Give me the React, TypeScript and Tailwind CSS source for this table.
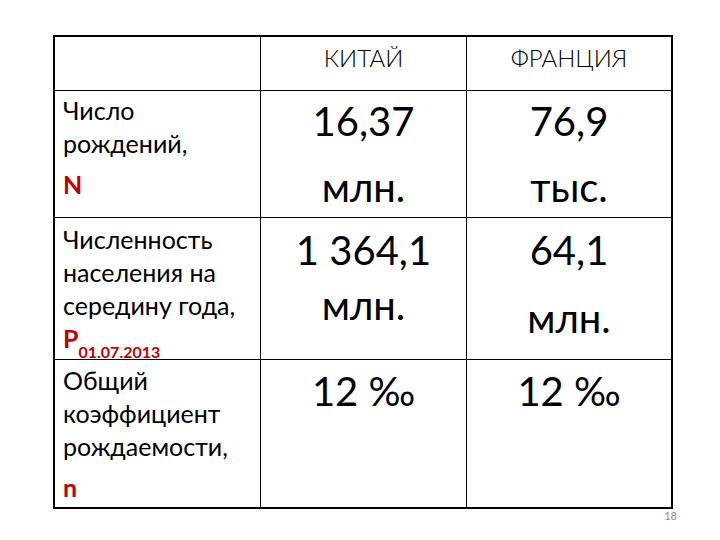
import React from "react";

const RED = "text-[#c00000]";

export default function App() {
  return (
    <div
      className="w-[720px] h-[540px] bg-white text-black overflow-hidden"
      style={{ fontFamily: "Lato, 'Open Sans', 'Noto Sans', sans-serif" }}
    >
      <div className="pt-[35px] pl-[53px]">
        <div className="w-[620px] h-[474px] border-2 border-black grid grid-cols-[206px_206px_1fr] grid-rows-[54px_127px_142px_1fr]">
          {/* header */}
          <div className="border-r border-b border-black" />
          <div className="border-r border-b border-black pt-[9px] text-center text-[24px] leading-[24px] font-light">
            КИТАЙ
          </div>
          <div className="border-b border-black pt-[9px] text-center text-[24px] leading-[24px] font-light">
            ФРАНЦИЯ
          </div>

          {/* row 1 */}
          <div className="border-r border-b border-black pl-[8px] pt-[3px] text-[25px] leading-[33px]">
            <div>Число</div>
            <div>рождений,</div>
            <div className={`mt-[8px] font-bold ${RED}`}>N</div>
          </div>
          <div className="border-r border-b border-black pt-[10px] text-center text-[40px] leading-[40px]">
            <div>16,37</div>
            <div className="mt-[26px]">млн.</div>
          </div>
          <div className="border-b border-black pt-[10px] text-center text-[40px] leading-[40px]">
            <div>76,9</div>
            <div className="mt-[26px]">тыс.</div>
          </div>

          {/* row 2 */}
          <div className="border-r border-b border-black pl-[8px] pt-[5px] text-[25px] leading-[33px]">
            <div>Численность</div>
            <div>населения на</div>
            <div>середину года,</div>
            <div className={`font-bold ${RED}`}>
              P<sub className="text-[16px] align-[-6px]">01.07.2013</sub>
            </div>
          </div>
          <div className="border-r border-b border-black pt-[12px] text-center text-[40px] leading-[40px]">
            <div>1 364,1</div>
            <div className="mt-[15px]">млн.</div>
          </div>
          <div className="border-b border-black pt-[12px] text-center text-[40px] leading-[40px]">
            <div>64,1</div>
            <div className="mt-[28px]">млн.</div>
          </div>

          {/* row 3 */}
          <div className="border-r border-black pl-[8px] pt-[4px] text-[25px] leading-[33px]">
            <div>Общий</div>
            <div>коэффициент</div>
            <div>рождаемости,</div>
            <div className={`mt-[8px] font-bold ${RED}`}>n</div>
          </div>
          <div className="border-r border-black pt-[11px] text-center text-[40px] leading-[40px]">
            12 ‰
          </div>
          <div className="pt-[11px] text-center text-[40px] leading-[40px]">
            12 ‰
          </div>
        </div>
        <div className="w-[624px] flex justify-end">
          <span className="text-[11px] leading-[13px] text-[#8c8c8c]">18</span>
        </div>
      </div>
    </div>
  );
}
